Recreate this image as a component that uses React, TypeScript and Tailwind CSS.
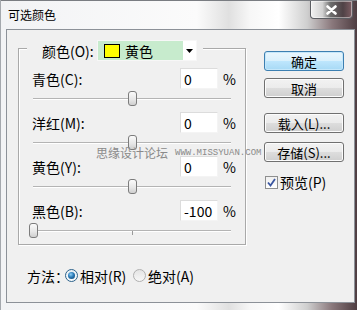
import React from "react";

const rows = [
  { label: "青色(C):", value: 0 },
  { label: "洋红(M):", value: 0 },
  { label: "黄色(Y):", value: 0 },
  { label: "黑色(B):", value: -100 },
];

function Button({ label, primary = false }: { label: string; primary?: boolean }) {
  return (
    <div
      className={`flex h-[20px] w-[80px] items-center justify-center rounded-[3px] border text-[13px] leading-none ${
        primary
          ? "border-[#3c7fb1] bg-[linear-gradient(180deg,#eaf6fd_0%,#d9f0fc_50%,#bee6fd_51%,#a7d9f5_100%)] shadow-[inset_0_0_0_1px_#c5e7fa]"
          : "border-[#707070] bg-[linear-gradient(180deg,#f2f2f2_0%,#ebebeb_50%,#dddddd_51%,#cfcfcf_100%)] shadow-[inset_0_0_0_1px_#fcfcfc]"
      }`}
    >
      {label}
    </div>
  );
}

function Slider({ value }: { value: number }) {
  const pct = (value + 100) / 2;
  return (
    <div className="relative mx-[1px] h-[23px] pt-[9px]">
      <div className="h-[2px] border-t border-[#b4b4b4] border-b border-b-white" />
      <div className="absolute left-1/2 top-[10px] h-[4px] w-px bg-[#9a9a9a]" />
      <div
        className="absolute top-[2px] h-[15px] w-[9px] rounded-[3px] border border-[#7c7c7c] bg-[linear-gradient(180deg,#fbfbfb_0%,#e6e6e6_60%,#cfcfcf_100%)]"
        style={{ left: `calc(${pct}% - 4px)` }}
      />
    </div>
  );
}

function Radio({ checked }: { checked: boolean }) {
  return (
    <span
      className={`flex h-[13px] w-[13px] shrink-0 items-center justify-center rounded-full border ${
        checked
          ? "border-[#2c628b] bg-[linear-gradient(180deg,#e6eef4,#f8fbfd)]"
          : "border-[#b0b0b0] bg-[linear-gradient(180deg,#e4e4e4,#f7f7f7)]"
      }`}
    >
      {checked && (
        <span className="h-[7px] w-[7px] rounded-full bg-[radial-gradient(circle_at_40%_35%,#8fd0f7_0%,#2a7ab8_45%,#0c3d66_100%)]" />
      )}
    </span>
  );
}

export default function App() {
  return (
    <div className="relative h-[310px] w-[357px] overflow-hidden border-l border-[#a4a8ad] bg-[linear-gradient(90deg,#f2f3f5_0%,#fbfbfb_55%,#e0e0e0_64%,#f7f7f7_70%,#ffffff_78%,#cfcfcf_86%,#8a787c_93%,#4e3d41_100%)] font-['Noto_Sans_CJK_SC',sans-serif] text-black">
      {/* Title bar */}
      <div className="flex h-[29px] items-start justify-between border-t border-[#7a7d82]">
        <span className="ml-[7px] mt-[6px] text-[12px] leading-[16px]">可选颜色</span>
        <div className="mr-[4px] flex h-[18px] w-[43px] items-center justify-center rounded-b-[4px] border border-t-0 border-[#5c5e63] bg-[linear-gradient(90deg,#f2f2f2_0%,#d2d2d2_28%,#6c6c6c_48%,#4f4246_78%,#7d5d63_100%)] shadow-[inset_0_0_0_1px_rgba(255,255,255,0.45)]">
          <svg width="11" height="10" viewBox="0 0 11 10">
            <path d="M1.5 1.5 L9.5 8.5 M9.5 1.5 L1.5 8.5" stroke="#fff" strokeWidth="2.6" strokeLinecap="round" />
          </svg>
        </div>
      </div>

      {/* Panel */}
      <div className="ml-[5px] mr-[2px] flex h-[274px] border border-[#8c9198] bg-[#f0f0f0]">
        {/* Left column */}
        <div className="pl-[11px] pt-[18px]">
          <div className="flex w-[228px] flex-col border border-[#a9a9a9] shadow-[inset_1px_1px_0_#fff,1px_1px_0_#fff]">
            {/* Legend */}
            <div className="-mt-[9px] ml-[8px] flex h-[21px] items-center self-start bg-[#f0f0f0] pl-[15px] pr-[6px]">
              <span className="w-[55px] whitespace-nowrap text-[14px] leading-none">颜色(O):</span>
              <div className="flex h-[21px] w-[100px] border border-[#f7f7f7]">
                <div className="flex flex-1 items-center bg-[#c7ebcd]">
                  <span className="ml-[6px] h-[14px] w-[16px] border border-black bg-[#ffff00]" />
                  <span className="ml-[5px] text-[14px] leading-none">黄色</span>
                </div>
                <div className="flex w-[13px] items-center justify-center bg-white">
                  <svg width="7" height="4" viewBox="0 0 7 4">
                    <path d="M0 0 H7 L3.5 4 Z" fill="#000" />
                  </svg>
                </div>
              </div>
            </div>

            {/* Rows */}
            <div className="mt-[7px] px-[13px]">
              {rows.map((row) => (
                <div key={row.label}>
                  <div className="flex h-[21px] items-center">
                    <span className="flex-1 text-[14px] leading-none">{row.label}</span>
                    <div className="flex h-[21px] w-[38px] items-center border border-[#dcdcdc] border-r-[#f4f4f4] border-b-[#f4f4f4] bg-white pl-[3px] text-[14px] leading-none">
                      {row.value}
                    </div>
                    <span className="ml-[5px] w-[9px] text-[14px] leading-none">%</span>
                  </div>
                  <Slider value={row.value} />
                </div>
              ))}
            </div>
          </div>

          {/* Method */}
          <div className="ml-[9px] mt-[21px] flex h-[19px] items-center whitespace-nowrap text-[14px] leading-none">
            <span className="w-[38px] shrink-0">方法：</span>
            <Radio checked />
            <span className="ml-[2px] w-[53px] shrink-0">相对(R)</span>
            <Radio checked={false} />
            <span className="ml-[2px]">绝对(A)</span>
          </div>
        </div>

        {/* Right column */}
        <div className="ml-[18px] flex flex-col pt-[21px]">
          <Button label="确定" primary />
          <div className="mt-[7px]">
            <Button label="取消" />
          </div>
          <div className="mt-[15px]">
            <Button label="载入(L)..." />
          </div>
          <div className="mt-[9px]">
            <Button label="存储(S)..." />
          </div>
          <div className="ml-[1px] mt-[13px] flex items-center text-[14px] leading-none">
            <span className="flex h-[13px] w-[13px] items-center justify-center border border-[#8e8f8f] bg-[linear-gradient(180deg,#f0f0f0,#ffffff)]">
              <svg width="9" height="9" viewBox="0 0 9 9">
                <path d="M1 4.5 L3.5 7.5 L8 1" fill="none" stroke="#3a56a0" strokeWidth="1.8" />
              </svg>
            </span>
            <span className="ml-[2px]">预览(P)</span>
          </div>
        </div>
      </div>

      {/* Watermark */}
      <div className="pointer-events-none absolute left-[95px] top-[147px] flex items-center text-[#8a8a8a]">
        <span className="text-[12px] leading-none">思缘设计论坛</span>
        <span className="ml-[7px] font-['Liberation_Mono',monospace] text-[9px] leading-none">WWW.MISSYUAN.COM</span>
      </div>
    </div>
  );
}
